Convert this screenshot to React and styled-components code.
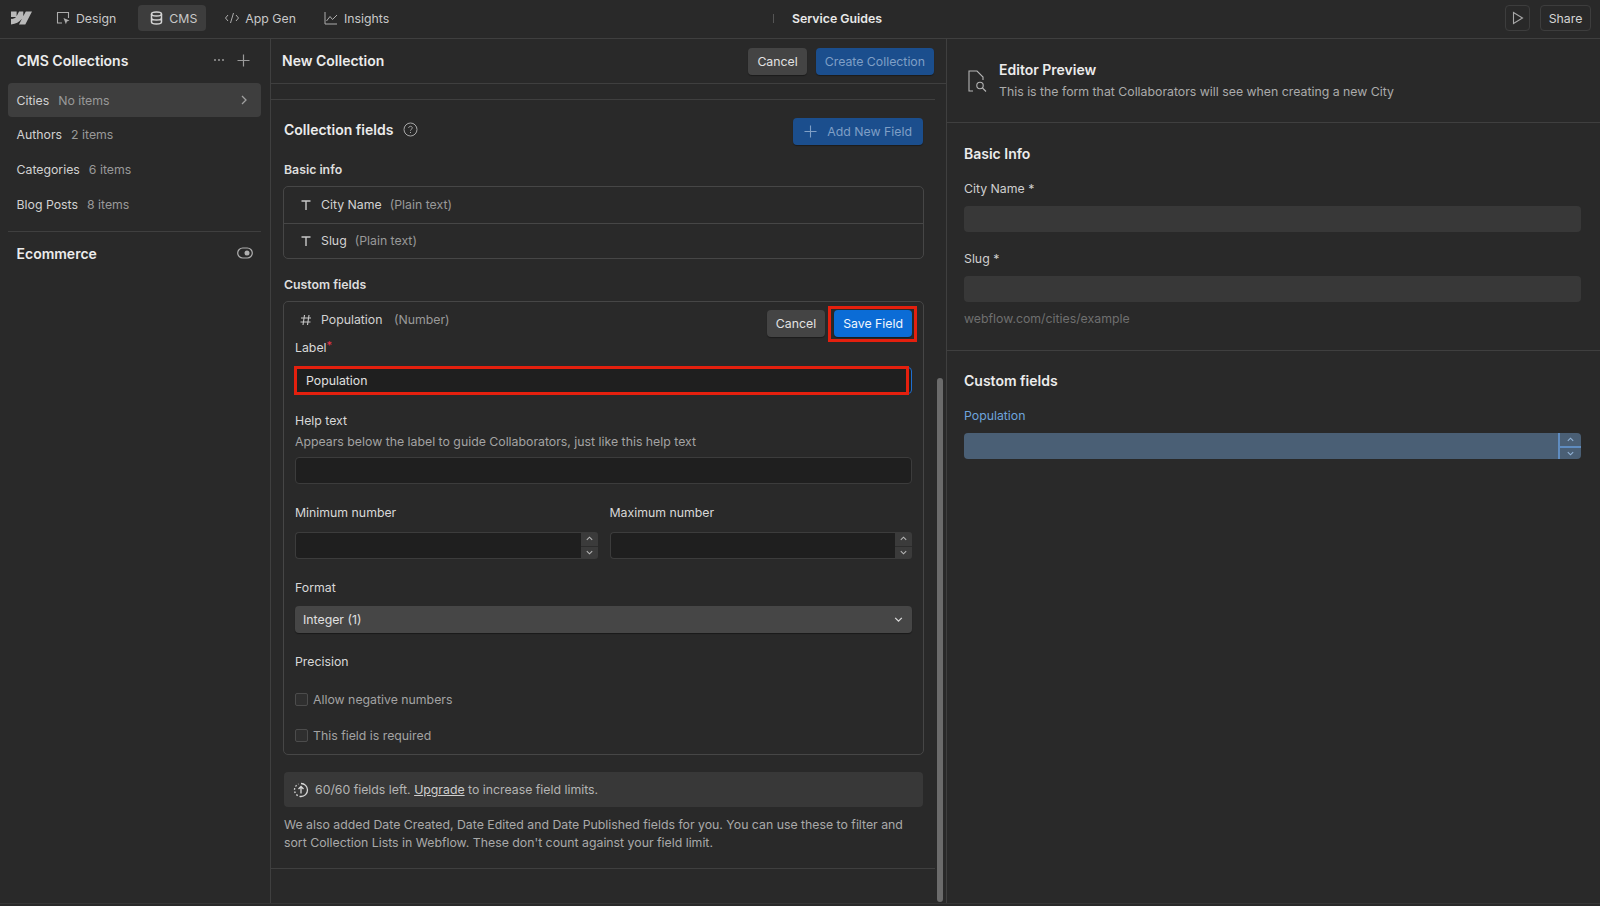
import React from 'react';
import styled, { createGlobalStyle } from 'styled-components';

const Global = createGlobalStyle`
  html, body { margin: 0; padding: 0; background: #292929; }
  body { font-family: Inter, "Noto Sans", sans-serif; font-size: 12.3px; color: #d9d9d9; overflow: hidden; }
  * { box-sizing: border-box; }
`;

const line = '#3f3f3f';

const Page = styled.div`
  width: 1600px;
  height: 906px;
  display: grid;
  grid-template-rows: 39px 865px;
  background: #292929;
  overflow: hidden;
`;

/* top bar */
const Topbar = styled.header`
  display: grid;
  grid-template-columns: 773px 1fr auto;
  align-items: center;
  border-bottom: 1px solid ${line};
  padding: 0 9px 2px 0;
`;
const Nav = styled.nav`
  display: flex;
  align-items: center;
  padding-left: 11px;
`;
const Logo = styled.svg`
  width: 21px;
  height: 14px;
  margin-right: 16px;
  fill: #b9b9b9;
`;
const Tab = styled.div`
  height: 26px;
  display: flex;
  align-items: center;
  gap: ${p => p.$gap || 6}px;
  padding: ${p => p.$pad || '0 8px'};
  margin-right: ${p => p.$mr || 0}px;
  border-radius: 4px;
  background: ${p => (p.$active ? '#3d3d3d' : 'transparent')};
  color: #c8c8c8;
  svg { color: ${p => (p.$active ? '#d4d4d4' : '#adadad')}; flex: none; }
`;
const ProjectTitle = styled.div`
  display: flex;
  align-items: center;
  gap: 18px;
  font-weight: 600;
  color: #e8e8e8;
  &::before {
    content: '';
    width: 1px;
    height: 9px;
    background: #555;
  }
`;
const TopActions = styled.div`
  display: flex;
  align-items: center;
  gap: 10px;
`;
const GhostButton = styled.div`
  height: 26px;
  width: ${p => p.$w}px;
  display: flex;
  align-items: center;
  justify-content: center;
  border: 1px solid #3d3d3d;
  border-radius: 4px;
  color: #d4d4d4;
  svg { color: #a8a8a8; }
`;

/* columns */
const Columns = styled.div`
  display: grid;
  grid-template-columns: 271px 676px 1fr;
  min-height: 0;
  border-bottom: 1px solid #353535;
`;
const Sidebar = styled.aside`
  border-right: 1px solid ${line};
  padding: 0 9px 0 8px;
`;
const SideHead = styled.div`
  height: 44px;
  display: flex;
  align-items: center;
  padding: 0 8.5px 2px;
  justify-content: space-between;
`;
const StrongTitle = styled.div`
  font-size: 14px;
  font-weight: 600;
  color: #ececec;
`;
const SideTools = styled.div`
  display: flex;
  align-items: center;
  gap: 12px;
  padding-right: 3px;
  svg { color: #9a9a9a; }
`;
const CollectionRow = styled.div`
  height: 34px;
  margin-bottom: ${p => (p.$last ? 10 : 0.7)}px;
  padding: 0 12px 0 8.5px;
  display: flex;
  align-items: center;
  gap: 9px;
  border-radius: 4px;
  background: ${p => (p.$active ? '#3e3e3e' : 'transparent')};
  color: #d2d2d2;
  svg { margin-left: auto; color: #a0a0a0; }
`;
const Muted = styled.span`
  color: ${p => p.$color || '#999'};
`;
const EcomSection = styled.div`
  border-top: 1px solid ${line};
  height: 44px;
  display: flex;
  align-items: center;
  justify-content: space-between;
  padding: 0 8.5px 1px;
  svg { color: #b0b0b0; }
`;

/* middle */
const Main = styled.main`
  display: grid;
  grid-template-rows: 45px 1fr;
  border-right: 1px solid ${line};
  min-height: 0;
`;
const MainHead = styled.div`
  display: flex;
  align-items: center;
  justify-content: space-between;
  padding: 0 12px 0 11px;
  border-bottom: 1px solid ${line};
`;
const HeadTitle = styled(StrongTitle)`
  margin-top: -2px;
`;
const HeadActions = styled.div`
  display: flex;
  gap: 9px;
`;
const Button = styled.div`
  height: 27px;
  padding: 0 ${p => p.$pad || 9}px;
  display: flex;
  align-items: center;
  gap: 10px;
  border-radius: 4px;
  background: ${p => ({ gray: '#444444', dim: '#1b4e8d', save: '#0b6cd6' }[p.$kind])};
  color: ${p => ({ gray: '#e2e2e2', dim: '#7f9fc6', save: '#f2f7fd' }[p.$kind])};
  box-shadow: 0 1px 1px rgba(0, 0, 0, 0.35);
`;
const MainBody = styled.div`
  display: grid;
  grid-template-columns: 1fr 11px;
  min-height: 0;
`;
const Scroller = styled.div`
  padding-top: 15px;
  min-width: 0;
`;
const FormArea = styled.div`
  border-top: 1px solid ${line};
  border-bottom: 1px solid ${line};
  padding: 18px 11px 0 12px;
  height: 770px;
`;
const ScrollTrack = styled.div`
  padding: 294px 3px 0 2px;
`;
const ScrollThumb = styled.div`
  height: 524px;
  background: #6b6b6b;
  border-radius: 3px;
`;
const SectionHead = styled.div`
  height: 26px;
  display: flex;
  align-items: center;
  justify-content: space-between;
  margin: 0 1px 18px;
`;
const TitleWithHelp = styled.div`
  display: flex;
  align-items: center;
  gap: 10px;
  margin-top: -4px;
  svg { color: #a8a8a8; }
`;
const GroupLabel = styled.div`
  font-weight: 600;
  color: #dedede;
  line-height: 16px;
  margin: 0 0 8px 1px;
`;
const FieldBox = styled.div`
  border: 1px solid #464646;
  border-radius: 5px;
  margin-bottom: ${p => p.$mb || 0}px;
`;
const FieldRow = styled.div`
  height: 35.5px;
  display: flex;
  align-items: center;
  padding-left: 16px;
  gap: 8px;
  color: #d2d2d2;
  & + & { border-top: 1px solid #464646; }
  svg { color: #c8c8c8; flex: none; margin-right: 1px; }
`;
const EditHead = styled.div`
  height: 38px;
  display: flex;
  align-items: flex-start;
  padding: 10px 11px 0 16px;
  gap: 8px;
  color: #d2d2d2;
  svg { color: #c8c8c8; flex: none; margin: 2px 1px 0 0; }
`;
const EditActions = styled.div`
  margin-left: auto;
  margin-top: -2px;
  display: flex;
  gap: 9px;
`;
const Outlined = styled.div`
  position: relative;
  &::after {
    content: '';
    position: absolute;
    inset: ${p => p.$inset || '-4px -5px -5px -6px'};
    border: 3px solid #e4200e;
    pointer-events: none;
  }
`;
const EditBody = styled.div`
  padding: 0 11px 11px 11px;
`;
const FieldLabel = styled.div`
  line-height: 16px;
  color: #d8d8d8;
  sup {
    color: #e5344a;
    font-size: 11px;
    line-height: 0;
    vertical-align: 3px;
  }
`;
const HelpLine = styled.div`
  line-height: 16px;
  margin-top: 5px;
  color: #a3a3a3;
`;
const TextInput = styled.div`
  height: 27px;
  margin-top: ${p => p.$mt || 7}px;
  padding: 0 10px;
  display: flex;
  align-items: center;
  background: #1f1f1f;
  border: 1px solid #3c3c3c;
  border-radius: 4px;
  color: #e0e0e0;
`;
const FocusInput = styled(TextInput)`
  border: 1px solid #1e6fd0;
  margin-top: 0;
`;
const FormGap = styled.div`
  margin-top: ${p => p.$mt}px;
`;
const TwoCols = styled.div`
  display: grid;
  grid-template-columns: 1fr 1fr;
  gap: 12px;
  margin-top: 21px;
`;
const NumberWrap = styled.div`
  height: 27px;
  margin-top: 11px;
  display: grid;
  grid-template-columns: 1fr 17px;
`;
const NumberField = styled.div`
  background: #1f1f1f;
  border: 1px solid #3c3c3c;
  border-right: none;
  border-radius: 4px 0 0 4px;
`;
const Spinner = styled.div`
  display: grid;
  grid-template-rows: 1fr 1fr;
  background: #3b3b3b;
  border-radius: 0 3px 3px 0;
  overflow: hidden;
  svg { display: block; margin: auto; color: #b5b5b5; }
`;
const SpinCell = styled.div`
  display: flex;
  align-items: center;
  justify-content: center;
  & + & { border-top: 1px solid #2c2c2c; }
`;
const Select = styled.div`
  height: 27px;
  margin-top: 10px;
  padding: 0 8px;
  display: flex;
  align-items: center;
  justify-content: space-between;
  background: #464646;
  border-radius: 4px;
  color: #e0e0e0;
  box-shadow: 0 1px 1px rgba(0, 0, 0, 0.4);
  svg { color: #d8d8d8; }
`;
const CheckRow = styled.div`
  display: flex;
  align-items: center;
  gap: 5px;
  height: 16px;
  margin-top: ${p => p.$mt}px;
  color: #a3a3a3;
`;
const Check = styled.span`
  width: 13px;
  height: 13px;
  border: 1px solid #4c4c4c;
  border-radius: 2px;
  background: #2f2f2f;
`;
const LimitBar = styled.div`
  height: 35px;
  margin: 17px 1px 0;
  padding: 0 9px;
  display: flex;
  align-items: center;
  gap: 6px;
  background: #383838;
  border-radius: 4px;
  color: #b4b4b4;
  svg { color: #d8d8d8; flex: none; }
  u { color: #cfcfcf; }
`;
const Note = styled.p`
  margin: 9px 1px 0;
  line-height: 17.5px;
  color: #a9a9a9;
`;

/* right */
const Preview = styled.section`
  min-width: 0;
`;
const PreviewHead = styled.div`
  height: 84px;
  display: flex;
  align-items: center;
  gap: 12px;
  padding: 0 19px 1px 20px;
  border-bottom: 1px solid ${line};
  svg { color: #b5b5b5; flex: none; margin-top: 2px; }
`;
const PreviewText = styled.div`
  display: flex;
  flex-direction: column;
  gap: 6px;
`;
const PreviewSection = styled.div`
  padding: ${p => p.$top || 22}px 19px 0 17px;
  height: ${p => p.$h || 'auto'};
  border-bottom: ${p => (p.$line ? `1px solid ${line}` : 'none')};
`;
const PreviewLabel = styled.div`
  line-height: 16px;
  margin-top: ${p => p.$mt || 0}px;
  color: ${p => p.$color || '#cfcfcf'};
`;
const PreviewInput = styled.div`
  height: 26px;
  margin-top: 9px;
  background: #383838;
  border-radius: 4px;
`;
const PreviewNumber = styled.div`
  height: 26px;
  margin-top: 9px;
  display: grid;
  grid-template-columns: 1fr 23px;
  background: #4a5f75;
  border-radius: 4px;
  overflow: hidden;
`;
const PreviewSpinner = styled.div`
  display: grid;
  grid-template-rows: 1fr 1fr;
  border-left: 2px solid #5f8cc0;
`;
const PreviewSpinCell = styled.div`
  display: flex;
  align-items: center;
  justify-content: center;
  color: #93b4d8;
  & + & { border-top: 2px solid #5f8cc0; }
`;
const Hint = styled.div`
  margin-top: 9px;
  line-height: 16px;
  color: #6f6f6f;
`;

const Chevron = ({ up, size = 9 }) => (
  <svg width={size} height={size} viewBox="0 0 10 10" fill="none" stroke="currentColor" strokeWidth="1.2">
    <path d={up ? 'M2 6.5 5 3.5 8 6.5' : 'M2 3.5 5 6.5 8 3.5'} />
  </svg>
);

const TextIcon = () => (
  <svg width="12" height="12" viewBox="0 0 12 12" fill="none" stroke="currentColor" strokeWidth="1.4">
    <path d="M1.5 2h9M6 2v9" />
  </svg>
);

const NumberInput = () => (
  <NumberWrap>
    <NumberField />
    <Spinner>
      <SpinCell><Chevron up /></SpinCell>
      <SpinCell><Chevron /></SpinCell>
    </Spinner>
  </NumberWrap>
);

export default function App() {
  return (
    <Page>
      <Global />
      <Topbar>
        <Nav>
          <Logo viewBox="0 4 24 16">
            <path d="M24 4.515l-7.658 14.97H9.149l3.205-6.204h-.144C9.566 16.713 5.621 18.973 0 19.485v-6.118s3.596-.213 5.71-2.435H0V4.515h6.417v5.278l.144-.001 2.622-5.277h4.854v5.244h.144l2.72-5.244H24z" />
          </Logo>
          <Tab $mr={14}>
            <svg width="14" height="14" viewBox="0 0 14 14" fill="none" stroke="currentColor" strokeWidth="1.1">
              <path d="M6 12H1.5V1.5h11V7" />
              <path d="M7.5 7 13.5 9.6l-2.6 1-1 2.6Z" fill="currentColor" stroke="none" />
            </svg>
            Design
          </Tab>
          <Tab $active $pad="0 9px 0 12px" $mr={10}>
            <svg width="13" height="14" viewBox="0 0 13 14" fill="none" stroke="currentColor" strokeWidth="1.5">
              <ellipse cx="6.5" cy="3" rx="5" ry="2" />
              <path d="M1.5 3v8c0 1.1 2.2 2 5 2s5-.9 5-2V3M1.5 7c0 1.1 2.2 2 5 2s5-.9 5-2" />
            </svg>
            CMS
          </Tab>
          <Tab $gap={5} $mr={12}>
            <svg width="16" height="12" viewBox="0 0 16 12" fill="none" stroke="currentColor" strokeWidth="1">
              <path d="M4 3 1.5 6 4 9M12 3l2.5 3L12 9M9.5 1 6.5 11" />
            </svg>
            App Gen
          </Tab>
          <Tab>
            <svg width="14" height="14" viewBox="0 0 14 14" fill="none" stroke="currentColor" strokeWidth="1">
              <path d="M1 1v12h12M2.5 10 6 5.5l2.5 3L13 4" />
            </svg>
            Insights
          </Tab>
        </Nav>
        <ProjectTitle>Service Guides</ProjectTitle>
        <TopActions>
          <GhostButton $w={25}>
            <svg width="12" height="14" viewBox="0 0 12 14" fill="none" stroke="currentColor" strokeWidth="1.1">
              <path d="M1.5 1.5v11L10.5 7Z" />
            </svg>
          </GhostButton>
          <GhostButton $w={51}>Share</GhostButton>
        </TopActions>
      </Topbar>
      <Columns>
        <Sidebar>
          <SideHead>
            <StrongTitle>CMS Collections</StrongTitle>
            <SideTools>
              <svg width="12" height="4" viewBox="0 0 12 4" fill="currentColor">
                <circle cx="2" cy="2" r="1" /><circle cx="6" cy="2" r="1" /><circle cx="10" cy="2" r="1" />
              </svg>
              <svg width="13" height="13" viewBox="0 0 13 13" fill="none" stroke="currentColor" strokeWidth="1.2">
                <path d="M6.5 0.5v12M0.5 6.5h12" />
              </svg>
            </SideTools>
          </SideHead>
          <CollectionRow $active>
            Cities <Muted>No items</Muted>
            <svg width="10" height="12" viewBox="0 0 10 12" fill="none" stroke="currentColor" strokeWidth="1.3">
              <path d="M3 2l4 4-4 4" />
            </svg>
          </CollectionRow>
          <CollectionRow>Authors <Muted>2 items</Muted></CollectionRow>
          <CollectionRow>Categories <Muted>6 items</Muted></CollectionRow>
          <CollectionRow $last>Blog Posts <Muted>8 items</Muted></CollectionRow>
          <EcomSection>
            <StrongTitle>Ecommerce</StrongTitle>
            <svg width="16" height="12" viewBox="0 0 16 12" fill="none" stroke="currentColor" strokeWidth="1.2">
              <rect x="0.7" y="1" width="14.6" height="10" rx="5" />
              <circle cx="10" cy="6" r="2.5" fill="currentColor" stroke="none" />
            </svg>
          </EcomSection>
        </Sidebar>

        <Main>
          <MainHead>
            <HeadTitle>New Collection</HeadTitle>
            <HeadActions>
              <Button $kind="gray">Cancel</Button>
              <Button $kind="dim">Create Collection</Button>
            </HeadActions>
          </MainHead>
          <MainBody>
            <Scroller>
              <FormArea>
                <SectionHead>
                  <TitleWithHelp>
                    <StrongTitle>Collection fields</StrongTitle>
                    <svg width="15" height="15" viewBox="0 0 15 15" fill="none" stroke="currentColor" strokeWidth="1">
                      <circle cx="7.5" cy="7.5" r="6.5" />
                      <path d="M5.7 6c0-1 .8-1.7 1.8-1.7s1.8.7 1.8 1.6c0 1.3-1.8 1.4-1.8 2.7M7.5 10v1" />
                    </svg>
                  </TitleWithHelp>
                  <Button $kind="dim" $pad={11}>
                    <svg width="13" height="13" viewBox="0 0 13 13" fill="none" stroke="currentColor" strokeWidth="1.1">
                      <path d="M6.5 0.5v12M0.5 6.5h12" />
                    </svg>
                    Add New Field
                  </Button>
                </SectionHead>
                <GroupLabel>Basic info</GroupLabel>
                <FieldBox $mb={18}>
                  <FieldRow><TextIcon /> City Name <Muted>(Plain text)</Muted></FieldRow>
                  <FieldRow><TextIcon /> Slug <Muted>(Plain text)</Muted></FieldRow>
                </FieldBox>
                <GroupLabel>Custom fields</GroupLabel>
                <FieldBox>
                  <EditHead>
                    <svg width="12" height="12" viewBox="0 0 12 12" fill="none" stroke="currentColor" strokeWidth="1.1">
                      <path d="M4.5 1 3 11M9 1 7.5 11M1 4h10M.5 8h10" />
                    </svg>
                    Population <Muted>&nbsp;(Number)</Muted>
                    <EditActions>
                      <Button $kind="gray">Cancel</Button>
                      <Outlined><Button $kind="save">Save Field</Button></Outlined>
                    </EditActions>
                  </EditHead>
                  <EditBody>
                    <FieldLabel>Label<sup>*</sup></FieldLabel>
                    <FormGap $mt={11}>
                      <Outlined $inset="-1px 3px -1px -1px">
                        <FocusInput>Population</FocusInput>
                      </Outlined>
                    </FormGap>
                    <FormGap $mt={19}>
                      <FieldLabel>Help text</FieldLabel>
                      <HelpLine>Appears below the label to guide Collaborators, just like this help text</HelpLine>
                    </FormGap>
                    <TextInput />
                    <TwoCols>
                      <div>
                        <FieldLabel>Minimum number</FieldLabel>
                        <NumberInput />
                      </div>
                      <div>
                        <FieldLabel>Maximum number</FieldLabel>
                        <NumberInput />
                      </div>
                    </TwoCols>
                    <FormGap $mt={21}>
                      <FieldLabel>Format</FieldLabel>
                      <Select>
                        Integer (1)
                        <Chevron size={11} />
                      </Select>
                    </FormGap>
                    <FormGap $mt={21}>
                      <FieldLabel>Precision</FieldLabel>
                    </FormGap>
                    <CheckRow $mt={21}><Check /> Allow negative numbers</CheckRow>
                    <CheckRow $mt={20}><Check /> This field is required</CheckRow>
                  </EditBody>
                </FieldBox>
                <LimitBar>
                  <svg width="16" height="16" viewBox="0 0 16 16" fill="none" stroke="currentColor" strokeWidth="1.3">
                    <path d="M8 1.5a6.5 6.5 0 1 1 0 13" />
                    <path d="M8 14.5a6.5 6.5 0 0 1-6.5-6.5 6.5 6.5 0 0 1 4-6" strokeDasharray="1.6 1.8" />
                    <path d="M8 11.5v-7M5.5 7 8 4.5 10.5 7" />
                  </svg>
                  <span>60/60 fields left. <u>Upgrade</u> to increase field limits.</span>
                </LimitBar>
                <Note>
                  We also added Date Created, Date Edited and Date Published fields for you. You can use these to filter and sort Collection Lists in Webflow. These don't count against your field limit.
                </Note>
              </FormArea>
            </Scroller>
            <ScrollTrack><ScrollThumb /></ScrollTrack>
          </MainBody>
        </Main>

        <Preview>
          <PreviewHead>
            <svg width="20" height="24" viewBox="0 0 20 24" fill="none" stroke="currentColor" strokeWidth="1.1">
              <path d="M6 22H2V2h8l6 6v3" />
              <circle cx="13" cy="16.5" r="3.2" />
              <path d="M15.5 19 19 22.5" />
            </svg>
            <PreviewText>
              <StrongTitle>Editor Preview</StrongTitle>
              <Muted $color="#ababab">This is the form that Collaborators will see when creating a new City</Muted>
            </PreviewText>
          </PreviewHead>
          <PreviewSection $line $h="228px">
            <StrongTitle>Basic Info</StrongTitle>
            <PreviewLabel $mt={19}>City Name *</PreviewLabel>
            <PreviewInput />
            <PreviewLabel $mt={19}>Slug *</PreviewLabel>
            <PreviewInput />
            <Hint>webflow.com/cities/example</Hint>
          </PreviewSection>
          <PreviewSection $top={21}>
            <StrongTitle>Custom fields</StrongTitle>
            <PreviewLabel $mt={19} $color="#6ea4dc">Population</PreviewLabel>
            <PreviewNumber>
              <div />
              <PreviewSpinner>
                <PreviewSpinCell><Chevron up /></PreviewSpinCell>
                <PreviewSpinCell><Chevron /></PreviewSpinCell>
              </PreviewSpinner>
            </PreviewNumber>
          </PreviewSection>
        </Preview>
      </Columns>
    </Page>
  );
}
